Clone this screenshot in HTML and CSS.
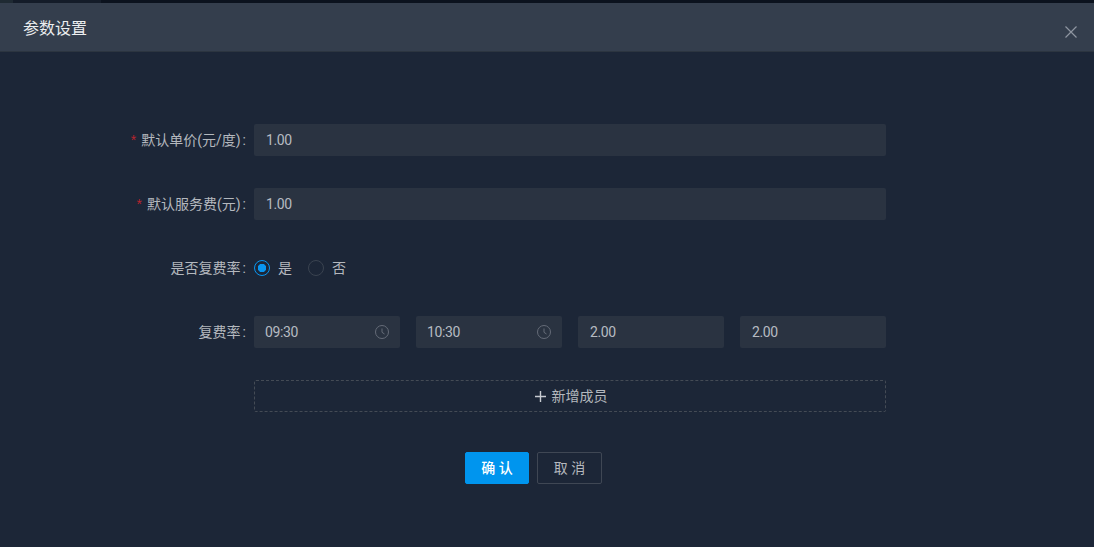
FILE: index.html
```html
<!DOCTYPE html>
<html lang="zh-CN">
  <head>
    <meta charset="UTF-8" />
    <meta name="viewport" content="width=device-width, initial-scale=1.0" />
    <title>参数设置</title>
    <link rel="stylesheet" href="styles.css">
  </head>
  <body>
    <div class="topstrip"><div class="topstrip-tab"><div class="topstrip-first"></div></div></div>
    <div class="modal-head">
      <h3 class="modal-title">参数设置</h3>
      <svg class="modal-close" width="12" height="12" viewBox="0 0 12 12">
        <path d="M.5.5l11 11M11.500.5l-11 11" stroke="#8f96a1" stroke-width="1.200" fill="none" />
      </svg>
    </div>
    <form class="form">
      <div class="row">
        <label class="label"><span class="req">*</span>默认单价(元/度)<span class="colon">:</span></label>
        <div class="control"><div class="input">1.00</div></div>
      </div>
      <div class="row">
        <label class="label"><span class="req">*</span>默认服务费(元)<span class="colon">:</span></label>
        <div class="control"><div class="input">1.00</div></div>
      </div>
      <div class="row">
        <label class="label">是否复费率<span class="colon">:</span></label>
        <div class="control radios">
          <span class="radio checked"></span><span class="radio-text">是</span>
          <span class="radio"></span><span class="radio-text">否</span>
        </div>
      </div>
      <div class="row">
        <label class="label">复费率<span class="colon">:</span></label>
        <div class="control cols">
          <div class="input time">09:30
            <svg width="14" height="14" viewBox="0 0 14 14" fill="none" stroke="#656c78">
              <circle cx="7" cy="7" r="6.500" />
              <path d="M7 3.500V7.300L9.500 9" />
            </svg>
          </div>
          <div class="input time">10:30
            <svg width="14" height="14" viewBox="0 0 14 14" fill="none" stroke="#656c78">
              <circle cx="7" cy="7" r="6.500" />
              <path d="M7 3.500V7.300L9.500 9" />
            </svg>
          </div>
          <div class="input">2.00</div>
          <div class="input">2.00</div>
        </div>
      </div>
      <div class="row">
        <div class="label"></div>
        <div class="control">
          <button type="button" class="add">
            <svg width="11" height="11" viewBox="0 0 11 11">
              <path d="M5.500 0v11M0 5.500h11" stroke="#c8ccd2" stroke-width="1.400" fill="none" />
            </svg>
            <span class="cjk">新增成员</span>
          </button>
        </div>
      </div>
      <div class="actions">
        <button type="button" class="btn primary"><span class="cjk">确 认</span></button>
        <button type="button" class="btn"><span class="cjk">取 消</span></button>
      </div>
    </form>
  </body>
</html>
```

FILE: styles.css
```css
* {
  padding: 0;
  margin: 0;
  box-sizing: border-box;
}
html,
body {
  height: 100%;
}
body {
  background-color: #1c2637;
  color: #b4b8be;
  font-family: "Roboto", "Noto Sans CJK SC", sans-serif;
  font-size: 14px;
  overflow: hidden;
}
.topstrip {
  height: 3px;
  background-color: #0b121e;
}
.topstrip-tab {
  width: 101px;
  height: 3px;
  background-color: #141c29;
}
.topstrip-first {
  width: 13px;
  height: 3px;
  background-color: #1f2a33;
}
.modal-head {
  display: flex;
  justify-content: space-between;
  align-items: center;
  height: 49px;
  padding: 0 17px 0 23px;
  background-color: #343e4d;
  border-bottom: 1px solid #2c3540;
}
.modal-title {
  font-size: 16px;
  font-weight: 400;
  color: #eceef0;
}
.modal-close {
  margin-top: 9px;
}
.form {
  display: flex;
  flex-direction: column;
  gap: 32px;
  padding-top: 72px;
}
.row {
  display: flex;
  align-items: center;
  height: 32px;
}
.label {
  width: 254px;
  padding-bottom: 2px;
  text-align: right;
  white-space: nowrap;
}
.colon {
  margin: 0 8px 0 2px;
}
.req {
  color: #b8242e;
  margin-right: 5px;
  font-family: "Liberation Sans", sans-serif;
}
.control {
  width: 632px;
}
.input {
  display: flex;
  justify-content: space-between;
  align-items: center;
  height: 32px;
  padding: 0 12px;
  background-color: #2a3341;
  border-radius: 2px;
  color: #b6bbc2;
  letter-spacing: -0.4px;
}
.time {
  padding: 0 11px;
}
.cols {
  display: grid;
  grid-template-columns: repeat(4, 1fr);
  gap: 16px;
}
.radios {
  display: flex;
  align-items: center;
}
.radio {
  width: 16px;
  height: 16px;
  border: 1px solid #3a4350;
  border-radius: 50%;
}
.radio.checked {
  border-color: #0996f0;
  background: radial-gradient(circle, #0996f0 0 4px, transparent 4.500px);
}
.radio-text {
  margin: 0 16px 2px 8px;
}
.add {
  display: flex;
  justify-content: center;
  align-items: center;
  gap: 6px;
  width: 100%;
  height: 32px;
  padding-left: 2px;
  background: transparent;
  border: 1px dashed #444b55;
  border-radius: 2px;
  color: #b4b8be;
  font: inherit;
}
.cjk {
  display: block;
  margin-bottom: 2px;
}
.actions {
  display: flex;
  justify-content: center;
  gap: 8px;
  width: 1067px;
  margin-top: 8px;
}
.btn {
  width: 65px;
  height: 32px;
  background: transparent;
  border: 1px solid #3f4754;
  border-radius: 2px;
  color: #b4b8be;
  font: inherit;
}
.primary {
  width: 64px;
  background-color: #0095ee;
  border-color: #0095ee;
  color: #fff;
  font-weight: 500;
}
```
